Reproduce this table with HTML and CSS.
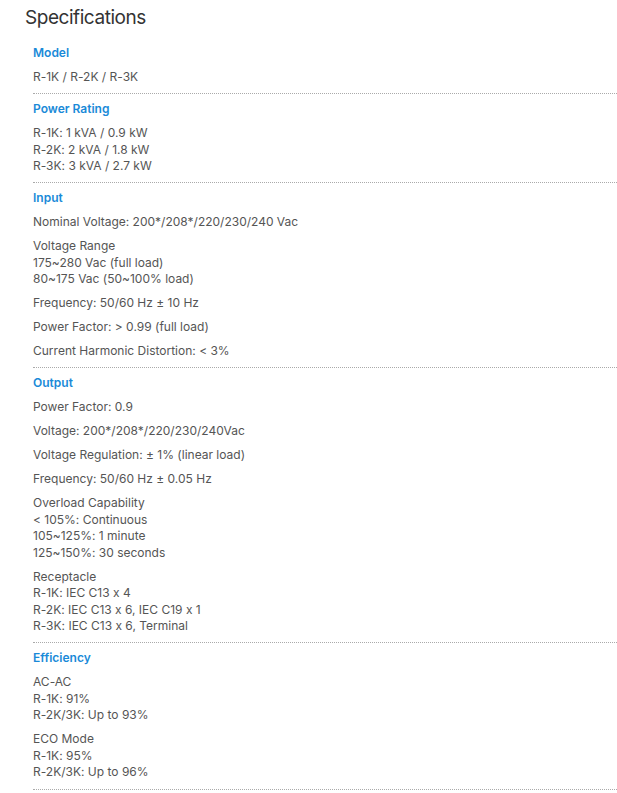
FILE: index.html
```html
<!DOCTYPE html>
<html>
<head>
<meta charset="utf-8">
<link rel="stylesheet" href="styles.css">
</head>
<body>
<div class="page">
  <h2 class="title">Specifications</h2>
  <div class="specs">
    <section class="spec">
      <h3 class="label">Model</h3>
      <p>R-1K / R-2K / R-3K</p>
    </section>
    <section class="spec">
      <h3 class="label">Power Rating</h3>
      <p>R-1K: 1 kVA / 0.9 kW<br>R-2K: 2 kVA / 1.8 kW<br>R-3K: 3 kVA / 2.7 kW</p>
    </section>
    <section class="spec">
      <h3 class="label">Input</h3>
      <p>Nominal Voltage: 200*/208*/220/230/240 Vac</p>
      <p>Voltage Range<br>175~280 Vac (full load)<br>80~175 Vac (50~100% load)</p>
      <p>Frequency: 50/60 Hz ± 10 Hz</p>
      <p>Power Factor: &gt; 0.99 (full load)</p>
      <p>Current Harmonic Distortion: &lt; 3%</p>
    </section>
    <section class="spec">
      <h3 class="label">Output</h3>
      <p>Power Factor: 0.9</p>
      <p>Voltage: 200*/208*/220/230/240Vac</p>
      <p>Voltage Regulation: ± 1% (linear load)</p>
      <p>Frequency: 50/60 Hz ± 0.05 Hz</p>
      <p>Overload Capability<br>&lt; 105%: Continuous<br>105~125%: 1 minute<br>125~150%: 30 seconds</p>
      <p>Receptacle<br>R-1K: IEC C13 x 4<br>R-2K: IEC C13 x 6, IEC C19 x 1<br>R-3K: IEC C13 x 6, Terminal</p>
    </section>
    <section class="spec">
      <h3 class="label">Efficiency</h3>
      <p>AC-AC<br>R-1K: 91%<br>R-2K/3K: Up to 93%</p>
      <p>ECO Mode<br>R-1K: 95%<br>R-2K/3K: Up to 96%</p>
    </section>
  </div>
</div>
</body>
</html>
```
FILE: styles.css
```css
html, body {
  margin: 0;
  padding: 0;
  background: #fff;
}
.page {
  font-family: Inter, "Noto Sans", sans-serif;
  font-feature-settings: "calt" 0;
  padding: 6px 0 0 25px;
}
.title {
  margin: 0;
  font-size: 19px;
  letter-spacing: -0.45px;
  font-weight: 400;
  color: #333;
  line-height: 24px;
}
.specs {
  padding-left: 8px;
  margin-top: 15px;
}
.spec {
  border-bottom: 1px dotted #aaa;
  padding: 7.5px 0 0.5px;
}
.spec:first-child {
  padding-top: 0;
}
.spec:last-child {
  padding-bottom: 2px;
}
.label {
  margin: 0 0 6.5px;
  font-size: 12px;
  font-weight: 600;
  color: #1a8ad8;
  line-height: 16.5px;
}
.spec p {
  margin: 0 0 6.5px;
  padding-top: 1px;
  font-size: 12px;
  color: #555;
  line-height: 16.5px;
}
```
